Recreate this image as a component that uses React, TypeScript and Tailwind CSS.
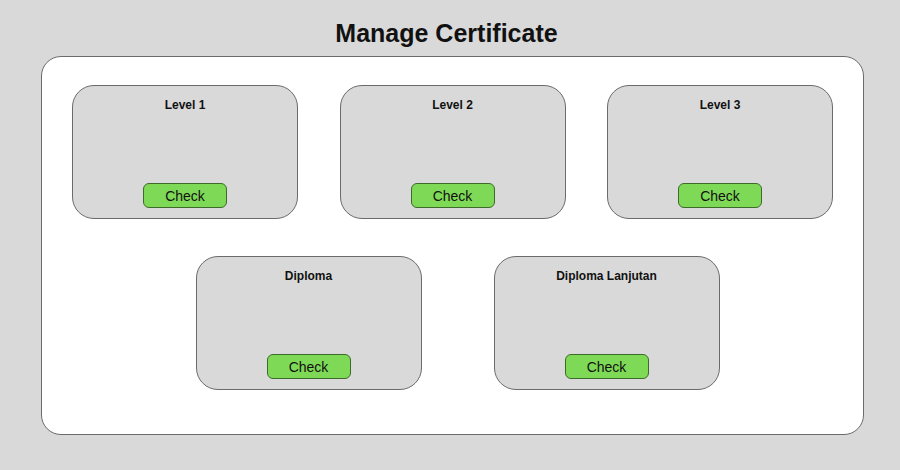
import React from 'react';

const levels = ['Level 1', 'Level 2', 'Level 3'];
const diplomas = ['Diploma', 'Diploma Lanjutan'];

const CertCard = ({ title }: { title: string }) => (
  <div className="w-[226px] h-[134px] rounded-[22px] border border-[#6b6b6b] bg-[#d9d9d9] flex flex-col items-center pt-[11px] pb-[10px]">
    <div className="text-[12px] font-bold text-[#111] leading-[16px]">{title}</div>
    <button className="mt-auto w-[84px] h-[25px] rounded-[6px] border border-[#3d6b2a] bg-[#7ed957] text-[14px] text-[#111] leading-none">
      Check
    </button>
  </div>
);

export default function App() {
  return (
    <div
      className="w-[900px] h-[470px] bg-[#d9d9d9] flex flex-col items-center"
      style={{ fontFamily: '"Liberation Sans", Arial, sans-serif' }}
    >
      <h1 className="mt-[17px] h-[32px] text-[25px] font-bold text-[#111] leading-[32px] mr-[7px]">Manage Certificate</h1>
      <div className="mt-[7px] ml-[5px] w-[823px] h-[379px] bg-white rounded-[20px] border border-[#6b6b6b] pt-[28px] px-[30px]">
        <div className="flex justify-between">
          {levels.map(l => <CertCard key={l} title={l} />)}
        </div>
        <div className="mt-[37px] flex justify-center gap-[72px] ml-[10px]">
          {diplomas.map(d => <CertCard key={d} title={d} />)}
        </div>
      </div>
    </div>
  );
}
